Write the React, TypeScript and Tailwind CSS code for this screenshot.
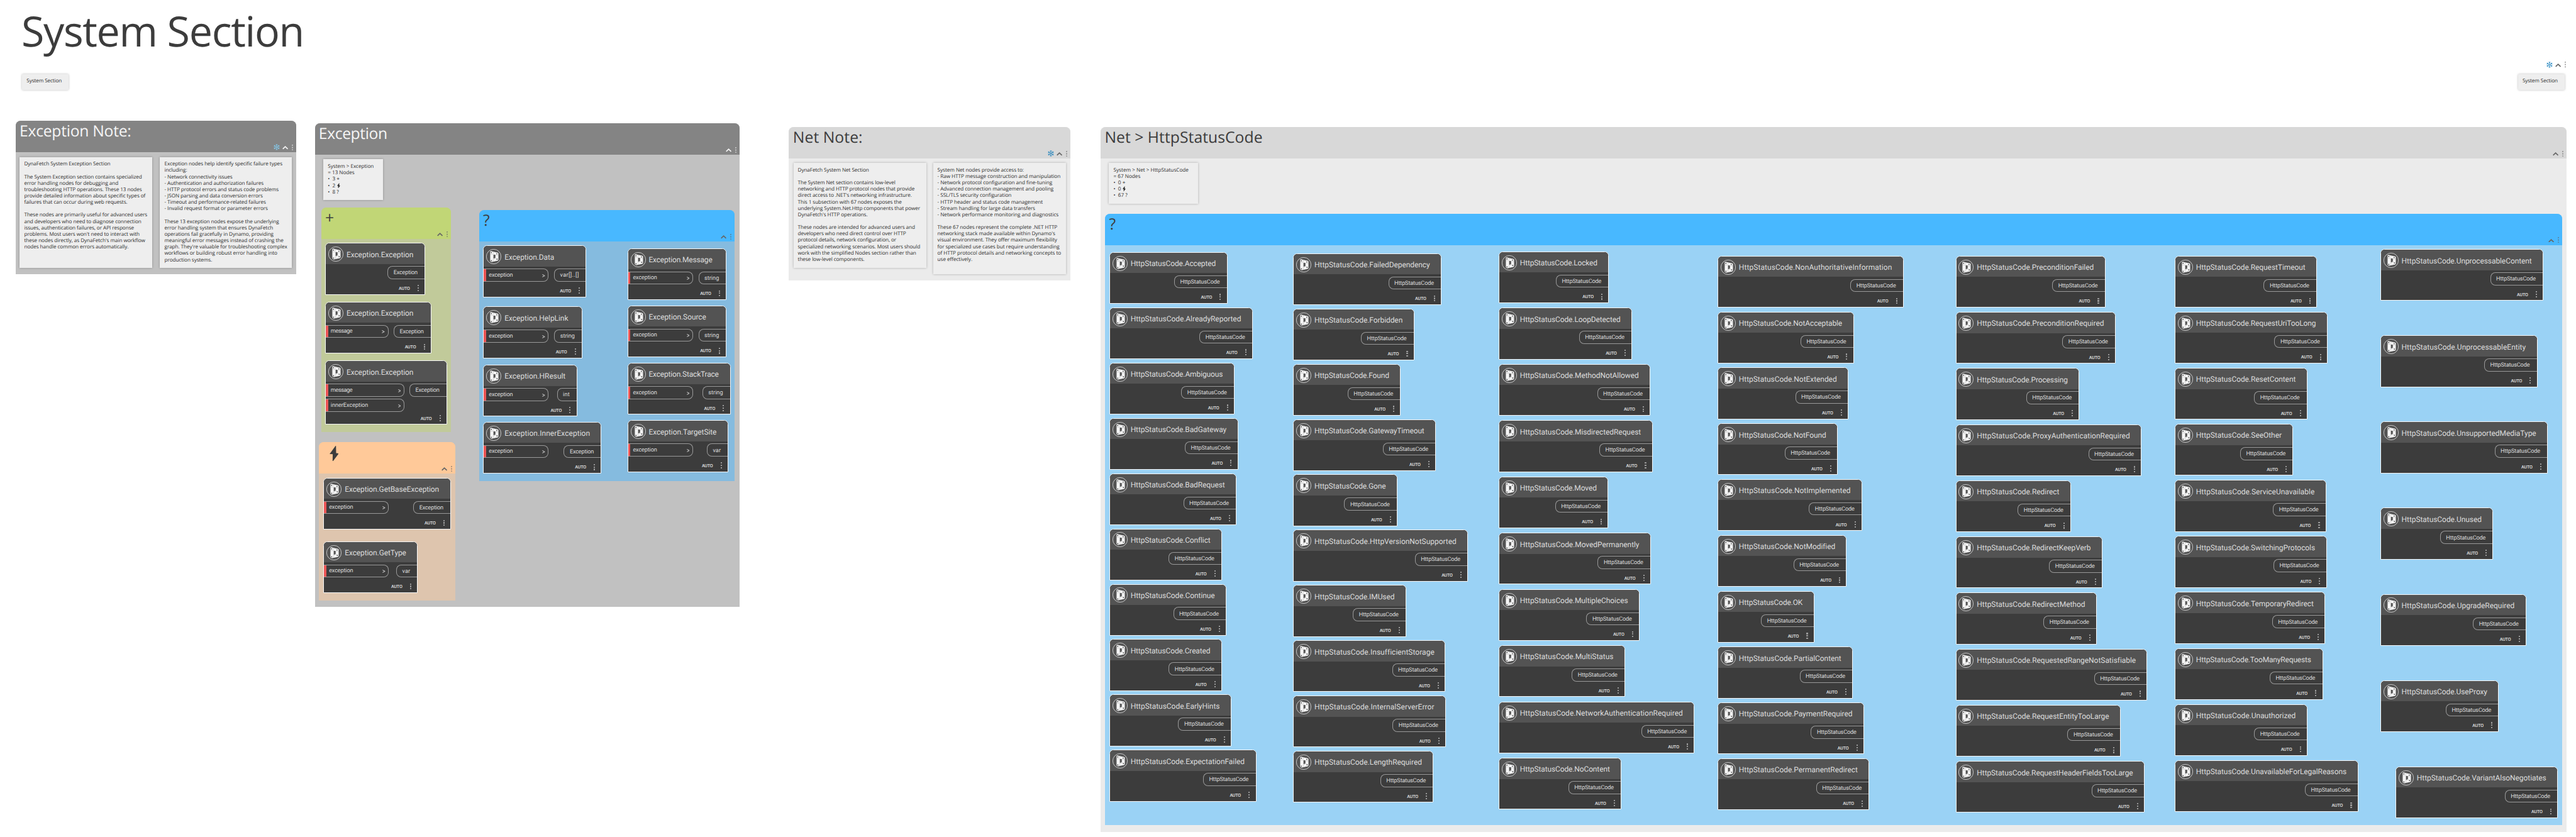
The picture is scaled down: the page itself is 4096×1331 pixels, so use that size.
import type { ReactNode } from "react";

const UI_FONT = '"Open Sans"';
const NODE_FONT = "Roboto";

const ctx = document.createElement("canvas").getContext("2d")!;

/* Letter spacing that makes `text` exactly `width` pixels wide. */
function tracking(text: string, font: string, width: number) {
  ctx.font = font;
  return (width - ctx.measureText(text).width) / Math.max(1, text.length - 1);
}

function Fit({ text, size, family = NODE_FONT, weight = 400, width, className = "" }: {
  text: string; size: number; family?: string; weight?: number; width: number; className?: string;
}) {
  return (
    <span
      className={`block shrink-0 whitespace-pre ${className}`}
      style={{ width, letterSpacing: tracking(text, `${weight} ${size}px ${family}`, width) }}
    >
      {text}
    </span>
  );
}

function Bolt({ className }: { className: string }) {
  return (
    <svg viewBox="0 0 62 102" className={className} fill="currentColor">
      <path d="M40 0h3l1 49 18 2-38 51h-4l1-46-21-1z" />
    </svg>
  );
}

function Snow({ className }: { className: string }) {
  return (
    <svg viewBox="0 0 14 14" className={className} fill="none" stroke="currentColor" strokeWidth="1.1">
      {[0, 60, 120, 180, 240, 300].map((a) => (
        <path key={a} transform={`rotate(${a} 7 7)`} d="M7 5V0M5.2 1 7 2.800 8.800 1" />
      ))}
      <circle cx="7" cy="7" r="1.700" />
    </svg>
  );
}

function HeaderIcons({ snow, tone }: { snow?: string; tone: string }) {
  return (
    <div className={`flex h-3.5 items-center self-end ${tone}`}>
      {snow && <Snow className={`mr-1.5 size-3.5 ${snow}`} />}
      <svg viewBox="0 0 13 8" className="mt-0.5 mr-2 h-2 w-[13px]" fill="none" stroke="currentColor" strokeWidth="2.400">
        <path d="M1 7 6.500 1.700 12 7" />
      </svg>
      <svg viewBox="0 0 3 13" className="h-[13px] w-[3px]" fill="none" stroke="currentColor" strokeWidth="0.900">
        <path d="M0 .5h2.500v2M.5 1.500v1.500M.5 10v1M0 12.500h2.500v-2" />
        <circle cx="1.500" cy="6.500" r="1.100" />
      </svg>
    </div>
  );
}

function Group({ className, head, ink = "text-[#3c3c3c]", tone = "text-[#666]", snow, title, children }: {
  className: string; head: string; ink?: string; tone?: string; snow?: string; title: ReactNode; children: ReactNode;
}) {
  return (
    <section className={`flex shrink-0 flex-col rounded-t-[11px] ${className}`}>
      <header className={`flex h-[71px] shrink-0 justify-between rounded-t-[11px] pr-[7px] pb-1 pl-[9px] ${head} ${ink}`}>
        {title}
        <HeaderIcons snow={snow} tone={tone} />
      </header>
      {children}
    </section>
  );
}

function GroupTitle({ text, width }: { text: string; width: number }) {
  return <Fit text={text} width={width} size={35} family={UI_FONT} className="text-[35px] leading-[48px]" />;
}

function Note({ className, longest, width, lines }: {
  className: string; longest: string; width: number; lines: ReactNode[];
}) {
  return (
    <div
      className={`shrink-0 bg-[#eeeeee] pt-[9.5px] pl-[10px] text-[11.6px] leading-[14.4px] whitespace-pre text-[#2e2e2e] shadow-[0_0_5px_rgba(0,0,0,0.28)] ${className}`}
      style={{ letterSpacing: tracking(longest, `11.6px ${UI_FONT}`, width) }}
    >
      {lines.map((line, i) => (
        <p key={i} className="h-[14.4px]">{line}</p>
      ))}
    </div>
  );
}

function SectionTag() {
  return (
    <Note
      className="h-9 w-[105px] rounded-[2px]"
      longest="System Section"
      width={79.5}
      lines={["System Section"]}
    />
  );
}

function NodeLogo() {
  return (
    <svg viewBox="0 0 101 101" className="mt-0.5 size-[34px] shrink-0">
      <circle cx="50.500" cy="50.500" r="49" fill="none" stroke="#f5f5f5" strokeWidth="3" />
      <path
        fill="#f5f5f5"
        fillRule="evenodd"
        d="M27 19q0-5 6-5l15 4 29 6q5 1 5 6v42q0 4-4 6L40 86q-12 3-13-7zM49 37v27l13-5V39z"
      />
      <g fill="#535353">
        <circle cx="35" cy="24" r="4" />
        <circle cx="71" cy="32" r="4" />
        <circle cx="73" cy="68" r="4" />
        <circle cx="35" cy="78" r="4" />
      </g>
      <path d="M48 20v12M28 36h18M62 42h20M48 84V68l22-8" stroke="#9a9a9a" strokeWidth="1.500" fill="none" />
    </svg>
  );
}

const LABEL_WIDTH: Record<string, number> = {
  HttpStatusCode: 89.5, Exception: 54.5, string: 33, var: 18, int: 15, "var[]..[]": 42.5,
  exception: 54.5, message: 49.5, innerException: 84.5,
};

type NodeData = {
  width: number; title: string; titleWidth?: number;
  out?: string; ins?: string[]; inWidth?: number; className?: string;
};

function NodeCard({ width, title, titleWidth = width - 74, out = "HttpStatusCode", ins = [], inWidth = 147, className = "h-[116.5px]" }: NodeData) {
  return (
    <article
      className={`flex shrink-0 flex-col rounded-t-[9px] border border-[#f7f7f7] bg-[#3c3c3c] font-[Roboto,sans-serif] text-[#dcdcdc] ${className}`}
      style={{ width }}
    >
      <div className="flex h-[46px] shrink-0 items-center gap-[7px] rounded-t-[8px] bg-[#535353] pl-[5.5px]">
        <NodeLogo />
        <Fit text={title} width={titleWidth} size={17} className="mt-[3px] text-[17px]" />
      </div>
      <div className="flex items-start justify-between pt-[5px]">
        <div className="flex flex-col gap-[5px]">
          {ins.map((label) => (
            <div
              key={label}
              className="flex h-[29px] items-center justify-between rounded-r-[11px] border border-l-0 border-[#999] pr-1.5"
              style={{ width: inWidth - 1 }}
            >
              <span className="mr-1.5 h-full w-[5px] bg-[#eb5555]" />
              <Fit text={label} width={LABEL_WIDTH[label]} size={13} className="text-[13px]" />
              <svg viewBox="0 0 7 7" className="mt-0.5 ml-auto size-[7px]" fill="none" stroke="#dcdcdc" strokeWidth="1.400">
                <path d="M.5.8 6 3.500.500 6.200" />
              </svg>
            </div>
          ))}
        </div>
        <div className="flex h-[29px] items-center rounded-l-[11px] border border-r-0 border-[#999] pr-[15.5px] pl-3">
          <Fit text={out} width={LABEL_WIDTH[out]} size={13} className="mt-0.5 text-[13px]" />
        </div>
      </div>
      <div className="mt-auto mb-[6.5px] flex items-center justify-end gap-[17px] pr-[13px]">
        <Fit text="AUTO" width={25.3} size={10} weight={500} className="mt-px text-[10px] leading-[13px] font-medium text-[#e0e0e0]" />
        <div className="flex flex-col gap-[2.5px]">
          <i className="size-[3px] bg-[#999]" />
          <i className="size-[3px] bg-[#999]" />
          <i className="size-[3px] bg-[#999]" />
        </div>
      </div>
    </article>
  );
}

const createNodes: NodeData[] = [
  { width: 225.3, title: "Exception.Exception", titleWidth: 151, out: "Exception" },
  { width: 239, title: "Exception.Exception", titleWidth: 151, out: "Exception", ins: ["message"], inWidth: 142 },
  { width: 274.5, title: "Exception.Exception", titleWidth: 151, out: "Exception", ins: ["message", "innerException"], inWidth: 177.5, className: "h-[144.5px]" },
];

const actionNodes: NodeData[] = [
  { width: 287.2, title: "Exception.GetBaseException", titleWidth: 212.5, out: "Exception", ins: ["exception"] },
  { width: 212, title: "Exception.GetType", titleWidth: 138.5, out: "var", ins: ["exception"] },
];

const queryNodesLeft: NodeData[] = [
  { width: 232.2, title: "Exception.Data", titleWidth: 112, out: "var[]..[]", ins: ["exception"], className: "mb-[21px] h-[116.5px]" },
  { width: 223.2, title: "Exception.HelpLink", titleWidth: 143.5, out: "string", ins: ["exception"], className: "mb-[15px] h-[116.5px]" },
  { width: 211.3, title: "Exception.HResult", titleWidth: 137.5, out: "int", ins: ["exception"], className: "mb-3 h-[116.5px]" },
  { width: 266.2, title: "Exception.InnerException", titleWidth: 192.5, out: "Exception", ins: ["exception"] },
];

const queryNodesRight: NodeData[] = [
  { width: 223.3, title: "Exception.Message", titleWidth: 143.5, out: "string", ins: ["exception"] },
  { width: 223.3, title: "Exception.Source", titleWidth: 129.5, out: "string", ins: ["exception"] },
  { width: 232.2, title: "Exception.StackTrace", titleWidth: 158, out: "string", ins: ["exception"] },
  { width: 227.2, title: "Exception.TargetSite", titleWidth: 153, out: "var", ins: ["exception"] },
];

/* Columns of status codes, each a list of [name, card width]. */
const statusColumns: { className: string; codes: [string, number][] }[] = [
  {
    className: "mt-[15.7px] h-[1238px] w-[414.2px]",
    codes: [
      ["Accepted", 266], ["AlreadyReported", 323], ["Ambiguous", 282], ["BadGateway", 290], ["BadRequest", 286.5],
      ["Conflict", 253.6], ["Continue", 263.8], ["Created", 253.6], ["EarlyHints", 275], ["ExpectationFailed", 331],
    ],
  },
  {
    className: "mt-[18.7px] h-[1237.4px] w-[462.8px]",
    codes: [
      ["FailedDependency", 334.2], ["Forbidden", 272.6], ["Found", 242.5], ["GatewayTimeout", 321.5], ["Gone", 234.8],
      ["HttpVersionNotSupported", 393.8], ["IMUsed", 254.5], ["InsufficientStorage", 342.7], ["InternalServerError", 343.8],
      ["LengthRequired", 316.1],
    ],
  },
  {
    className: "mt-[14.6px] h-[1257.2px] w-[493px]",
    codes: [
      ["Locked", 248.6], ["LoopDetected", 300.7], ["MethodNotAllowed", 341.7], ["MisdirectedRequest", 346.6],
      ["Moved", 247], ["MovedPermanently", 342.8], ["MultipleChoices", 317.4], ["MultiStatus", 284.6],
      ["NetworkAuthenticationRequired", 441], ["NoContent", 276.6],
    ],
  },
  {
    className: "mt-[24.4px] h-[1248.6px] w-[536.2px]",
    codes: [
      ["NonAuthoritativeInformation", 419], ["NotAcceptable", 306.8], ["NotExtended", 294.8], ["NotFound", 270.9],
      ["NotImplemented", 325.7], ["NotModified", 290.8], ["OK", 217.8], ["PartialContent", 304.8],
      ["PaymentRequired", 330], ["PermanentRedirect", 341.9],
    ],
  },
  {
    className: "mt-[24.4px] h-[1254.6px] w-[493.6px]",
    codes: [
      ["PreconditionFailed", 337.4], ["PreconditionRequired", 360.4], ["Processing", 278.8],
      ["ProxyAuthenticationRequired", 418.8], ["Redirect", 259.8], ["RedirectKeepVerb", 330.6], ["RedirectMethod", 317.8],
      ["RequestedRangeNotSatisfiable", 431.6], ["RequestEntityTooLarge", 371.8], ["RequestHeaderFieldsTooLarge", 425.8],
    ],
  },
  {
    className: "mt-[24.4px] h-[1252.5px] w-[462.8px]",
    codes: [
      ["RequestTimeout", 320.2], ["RequestUriTooLong", 344.2], ["ResetContent", 298.6], ["SeeOther", 267],
      ["ServiceUnavailable", 341], ["SwitchingProtocols", 342.2], ["TemporaryRedirect", 339.1], ["TooManyRequests", 333.6],
      ["Unauthorized", 298.6], ["UnavailableForLegalReasons", 413.2],
    ],
  },
  {
    className: "mt-[9.4px] h-[1281.6px] w-[400.2px]",
    codes: [
      ["UnprocessableContent", 367.6], ["UnprocessableEntity", 354], ["UnsupportedMediaType", 377.4], ["Unused", 254.6],
      ["UpgradeRequired", 328.8], ["UseProxy", 267.4], ["VariantAlsoNegotiates", 365.8],
    ],
  },
];

function countLines(path: string, total: string, plus: string, bolt: string, query: string): ReactNode[] {
  return [
    path,
    `= ${total} Nodes`,
    `•  ${plus} +`,
    <>{`•  ${bolt} `}<Bolt className="ml-px inline h-[12px] w-[7px] align-[-2px]" /></>,
    `•  ${query} ?`,
  ];
}

export default function App() {
  return (
    <div className="h-[1331px] w-[4096px] overflow-hidden bg-white">
      <main className="flex h-[1885px] w-[5802px] flex-col bg-white font-['Open_Sans',sans-serif] [text-rendering:geometricPrecision] [zoom:0.70597]">
        <header className="flex h-[157px] shrink-0 justify-between pr-[23px] pb-1 pl-[48px] text-[#3c3c3c]">
          <Fit text="System Section" width={638} size={94} family={UI_FONT} className="pt-[6px] text-[94px] leading-[128px]" />
          <HeaderIcons snow="text-[#0c78b8]" tone="text-[#666]" />
        </header>
        <div className="mt-[9.5px] flex shrink-0 justify-between pr-[25.5px] pl-[50px]">
          <SectionTag />
          <SectionTag />
        </div>

        <div className="mt-[69.5px] flex items-start pl-[35px]">
          <Group className="h-[346px] w-[632.3px] bg-[#c1c1c1]" head="bg-[#848484]" ink="text-[#f5f5f5]" tone="text-[#f5f5f5]"
            snow="text-[#84d7ff]" title={<GroupTitle text="Exception Note:" width={252} />}>
            <div className="flex gap-[18px] pt-[10.5px] pl-[9.5px]">
              <Note className="h-[249.5px] w-[298px]" longest="provide detailed information about specific types of" width={273.7} lines={[
                "DynaFetch System Exception Section",
                "",
                "The System Exception section contains specialized",
                "error handling nodes for debugging and",
                "troubleshooting HTTP operations. These 13 nodes",
                "provide detailed information about specific types of",
                "failures that can occur during web requests.",
                "",
                "These nodes are primarily useful for advanced users",
                "and developers who need to diagnose connection",
                "issues, authentication failures, or API response",
                "problems. Most users won't need to interact with",
                "these nodes directly, as DynaFetch's main workflow",
                "nodes handle common errors automatically.",
              ]} />
              <Note className="h-[249.5px] w-[297px]" longest="graph. They're valuable for troubleshooting complex" width={277} lines={[
                "Exception nodes help identify specific failure types",
                "including:",
                "- Network connectivity issues",
                "- Authentication and authorization failures",
                "- HTTP protocol errors and status code problems",
                "- JSON parsing and data conversion errors",
                "- Timeout and performance-related failures",
                "- Invalid request format or parameter errors",
                "",
                "These 13 exception nodes expose the underlying",
                "error handling system that ensures DynaFetch",
                "operations fail gracefully in Dynamo, providing",
                "meaningful error messages instead of crashing the",
                "graph. They're valuable for troubleshooting complex",
                "workflows or building robust error handling into",
                "production systems.",
              ]} />
            </div>
          </Group>

          <Group className="mt-1.5 ml-[41.7px] h-[1089px] w-[956.3px] bg-[#c1c1c1]" head="bg-[#848484]" ink="text-[#f5f5f5]" tone="text-[#f5f5f5]"
            title={<GroupTitle text="Exception" width={155} />}>
            <div className="flex items-start">
              <div className="flex w-[370px] shrink-0 flex-col items-start pt-[10px] pl-[9.8px]">
                <Note className="ml-[9.7px] h-[92px] w-[134px]" longest="System > Exception" width={103.5}
                  lines={countLines("System > Exception", "13", "3", "2", "8")} />
                <Group className="mt-[16.3px] ml-[4.5px] h-[505.7px] w-[292.5px] bg-[#c1ca9a]" head="bg-[#c1d676]"
                  title={<GroupTitle text="+" width={21} />}>
                  <div className="flex flex-col gap-4 pt-[9px] pl-[9.2px]">
                    {createNodes.map((node) => <NodeCard key={node.width} {...node} />)}
                  </div>
                </Group>
                <Group className="mt-[23px] h-[356.5px] w-[306.3px] bg-[#dec5ae]" head="bg-[#ffc999]"
                  title={<Bolt className="mt-2 ml-[14px] h-[34px] w-[21px]" />}>
                  <div className="flex flex-col gap-[26.6px] pt-[9.3px] pl-[9.9px]">
                    {actionNodes.map((node) => <NodeCard key={node.title} {...node} />)}
                  </div>
                </Group>
              </div>
              <Group className="mt-[124px] h-[610.7px] w-[576px] bg-[#85bbdf]" head="bg-[#48b8ff]"
                title={<GroupTitle text="?" width={16} />}>
                <div className="flex items-start pl-[9.5px]">
                  <div className="flex w-[324.7px] flex-col pt-[9px]">
                    {queryNodesLeft.map((node) => <NodeCard key={node.title} {...node} />)}
                  </div>
                  <div className="mt-[15.2px] flex h-[504.3px] flex-col justify-between">
                    {queryNodesRight.map((node) => <NodeCard key={node.title} {...node} />)}
                  </div>
                </div>
              </Group>
            </div>
          </Group>

          <Group className="mt-3.5 ml-[111.7px] h-[346px] w-[634px] bg-[#ebebeb]" head="bg-[#d8d8d8]"
            snow="text-[#0c78b8]" title={<GroupTitle text="Net Note:" width={157} />}>
            <div className="flex items-start gap-[15px] pt-[10px] pl-[10px]">
              <Note className="h-[236px] w-[299.5px]" longest="underlying System.Net.Http components that power" width={276} lines={[
                "DynaFetch System Net Section",
                "",
                "The System Net section contains low-level",
                "networking and HTTP protocol nodes that provide",
                "direct access to .NET's networking infrastructure.",
                "This 1 subsection with 67 nodes exposes the",
                "underlying System.Net.Http components that power",
                "DynaFetch's HTTP operations.",
                "",
                "These nodes are intended for advanced users and",
                "developers who need direct control over HTTP",
                "protocol details, network configuration, or",
                "specialized networking scenarios. Most users should",
                "work with the simplified Nodes section rather than",
                "these low-level components.",
              ]} />
              <Note className="h-[250px] w-[299px]" longest="of HTTP protocol details and networking concepts to" width={279} lines={[
                "System Net nodes provide access to:",
                "- Raw HTTP message construction and manipulation",
                "- Network protocol configuration and fine-tuning",
                "- Advanced connection management and pooling",
                "- SSL/TLS security configuration",
                "- HTTP header and status code management",
                "- Stream handling for large data transfers",
                "- Network performance monitoring and diagnostics",
                "",
                "These 67 nodes represent the complete .NET HTTP",
                "networking stack made available within Dynamo's",
                "visual environment. They offer maximum flexibility",
                "for specialized use cases but require understanding",
                "of HTTP protocol details and networking concepts to",
                "use effectively.",
              ]} />
            </div>
          </Group>

          <Group className="mt-3.5 ml-[68px] h-[1588px] w-[3302px] bg-[#ebebeb]" head="bg-[#d8d8d8]"
            title={<GroupTitle text="Net > HttpStatusCode" width={356} />}>
            <div className="flex flex-col items-start gap-[22px] pt-[10px] pl-[10px]">
              <Note className="ml-[9px] h-[92px] w-[201px]" longest="System > Net > HttpStatusCode" width={169.5}
                lines={countLines("System > Net > HttpStatusCode", "67", "0", "0", "67")} />
              <Group className="h-[1378px] w-[3282px] bg-[#9ad2f5]" head="bg-[#48b8ff]"
                title={<GroupTitle text="?" width={16} />}>
                <div className="flex items-start pl-[9.6px]">
                  {statusColumns.map((column) => (
                    <div
                      key={column.codes[0][0]}
                      className={`flex shrink-0 flex-col items-start justify-between last:[&>article:last-child]:self-end ${column.className}`}
                    >
                      {column.codes.map(([name, width]) => (
                        <NodeCard key={name} title={`HttpStatusCode.${name}`} width={width} />
                      ))}
                    </div>
                  ))}
                </div>
              </Group>
            </div>
          </Group>
        </div>
      </main>
    </div>
  );
}
